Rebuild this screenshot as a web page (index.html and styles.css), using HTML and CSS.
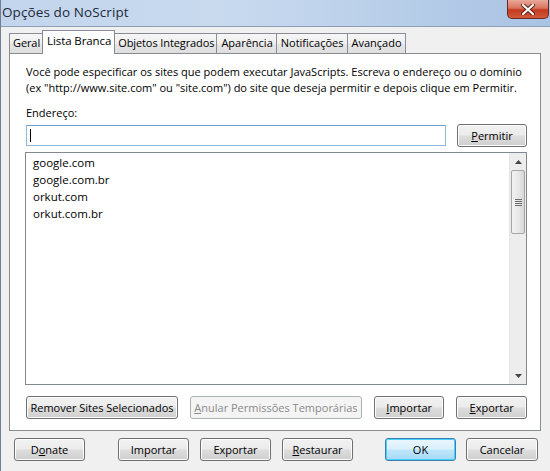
FILE: index.html
```html
<!DOCTYPE html>
<html lang="pt-BR">
<head>
<meta charset="utf-8">
<title>Opções do NoScript</title>
<link rel="stylesheet" href="styles.css">
</head>
<body>
<div class="window">
  <div class="titlebar">
    <span class="title">Opções do NoScript</span>
    <span class="close">
      <svg width="14" height="11" viewBox="0 0 14 11"><path d="M2 1 L12 10 M12 1 L2 10" stroke="#5a1a12" stroke-width="4" stroke-linecap="round"/><path d="M2 1 L12 10 M12 1 L2 10" stroke="#fff" stroke-width="2.2" stroke-linecap="round"/></svg>
    </span>
  </div>
  <div class="client">
    <div class="tabs">
      <div class="tab first">Geral</div>
      <div class="tab selected">Lista Branca</div>
      <div class="tab">Objetos Integrados</div>
      <div class="tab wide">Aparência</div>
      <div class="tab wide">Notificações</div>
      <div class="tab wide">Avançado</div>
    </div>
    <div class="panel">
      <p class="desc">Você pode especificar os sites que podem executar JavaScripts. Escreva o endereço ou o domínio (ex "http://www.site.com" ou "site.com") do site que deseja permitir e depois clique em Permitir.</p>
      <div class="label">Endereço:</div>
      <div class="addr-row">
        <div class="input"><span class="caret"></span></div>
        <button class="btn btn-permit"><u>P</u>ermitir</button>
      </div>
      <div class="list">
        <ul class="items">
          <li>google.com</li>
          <li>google.com.br</li>
          <li>orkut.com</li>
          <li>orkut.com.br</li>
        </ul>
        <div class="scrollbar">
          <div class="sb-btn"><svg width="7" height="4" viewBox="0 0 7 4"><path d="M0 4 L3.5 0 L7 4 Z" fill="#444"/></svg></div>
          <div class="sb-thumb"><span></span><span></span><span></span><span></span></div>
          <div class="sb-track"></div>
          <div class="sb-btn"><svg width="7" height="4" viewBox="0 0 7 4"><path d="M0 0 L3.5 4 L7 0 Z" fill="#444"/></svg></div>
        </div>
      </div>
      <div class="panel-buttons">
        <button class="btn w153">Remover Sites Selecionados</button>
        <button class="btn w173 disabled"><u>A</u>nular Permissões Temporárias</button>
        <button class="btn w71"><u>I</u>mportar</button>
        <button class="btn w71"><u>E</u>xportar</button>
      </div>
    </div>
    <div class="dialog-buttons">
      <button class="btn w71">D<u>o</u>nate</button>
      <button class="btn w71 gap-left">Importar</button>
      <button class="btn w71">Exportar</button>
      <button class="btn w71"><u>R</u>estaurar</button>
      <button class="btn w71 gap-ok default">OK</button>
      <button class="btn w72 tight">Cancelar</button>
    </div>
  </div>
</div>
</body>
</html>
```
FILE: styles.css
```css
* { box-sizing: border-box; }
html, body { margin: 0; padding: 0; }
body {
  width: 550px;
  height: 471px;
  overflow: hidden;
  background: #f0f0f0;
  font-family: "Open Sans", "Noto Sans", sans-serif;
  font-size: 11px;
  color: #000;
}
.window {
  width: 550px;
  height: 471px;
  display: flex;
  flex-direction: column;
  border-left: 1px solid #6f7f94;
}
.titlebar {
  height: 27px;
  display: flex;
  align-items: flex-start;
  background: linear-gradient(90deg, #c2d5ec 0%, #c9daef 40%, #b9cfe9 70%, #a9c3e3 100%);
  border-bottom: 1px solid #8d9fb5;
}
.title {
  font-size: 13.5px;
  color: #1e2a3a;
  padding: 3px 0 0 1px;
  letter-spacing: 0.1px;
}
.close {
  margin-left: auto;
  margin-right: 1px;
  width: 42px;
  height: 19px;
  display: flex;
  align-items: center;
  justify-content: center;
  background: linear-gradient(#e9a999 0%, #d9735f 45%, #c4391f 55%, #d25a3c 100%);
  border: 1px solid #6c2a1e;
  border-top: none;
  border-radius: 0 0 5px 5px;
}
.client {
  flex: 1;
  display: flex;
  flex-direction: column;
  padding: 4px 9px 0 8px;
}
.tabs {
  display: flex;
  align-items: flex-end;
  height: 23px;
  position: relative;
  z-index: 1;
  margin-bottom: -1px;
}
.tab {
  height: 20px;
  margin-bottom: 1px;
  padding: 0 2px 0 3px;
  line-height: 18px;
  border: 1px solid #898c95;
  border-left: none;
  border-bottom: none;
  background: linear-gradient(#f6f6f6 0%, #efefef 50%, #e6e6e6 51%, #dedede 100%);
  white-space: nowrap;
  letter-spacing: -0.1px;
}
.tab.wide { padding: 0 3px 0 4px; letter-spacing: 0; }
.tab.first { border-left: 1px solid #898c95; }
.tab.selected {
  height: 24px;
  margin-bottom: 0;
  line-height: 20px;
  background: #fff;
  border-left: 1px solid #898c95;
  margin-left: -1px;
  padding: 0 3px 0 4px;
  font-size: 11.5px;
}
.tab.selected + .tab { border-left: none; }
.panel {
  height: 378px;
  background: #fff;
  border: 1px solid #898c95;
  padding: 10px 13px 0 15px;
  display: flex;
  flex-direction: column;
}
.desc {
  margin: 0 0 0 1px;
  line-height: 16px;
  width: 500px;
}
.label {
  margin: 9px 0 0 1px;
  line-height: 16px;
}
.addr-row {
  display: flex;
  align-items: center;
  margin-top: 3px;
  height: 23px;
}
.input {
  width: 420px;
  height: 21px;
  margin-left: 1px;
  border: 1px solid #8fb7e0;
  border-top-color: #6f9fd0;
  background: #fff;
  padding: 3px 0 0 3px;
}
.caret {
  display: block;
  width: 1px;
  height: 13px;
  background: #000;
}
.btn-permit {
  margin-left: 11px;
  width: 70px;
}
.list {
  margin-top: 5px;
  height: 233px;
  border: 1px solid #828790;
  display: flex;
}
.items {
  flex: 1;
  list-style: none;
  margin: 0;
  padding: 1px 0 0 7px;
}
.items li {
  line-height: 17px;
  font-size: 11.5px;
}
.scrollbar {
  width: 17px;
  display: flex;
  flex-direction: column;
  background: #ededed;
  border-left: 1px solid #e4e4e4;
}
.sb-btn {
  height: 17px;
  display: flex;
  align-items: center;
  justify-content: center;
}
.sb-thumb {
  height: 64px;
  margin: 0 1px;
  border: 1px solid #a6a6a6;
  border-radius: 2px;
  background: linear-gradient(90deg, #f2f2f2, #e6e6e6 60%, #d6d6d6);
  display: flex;
  flex-direction: column;
  align-items: center;
  justify-content: center;
  gap: 1px;
}
.sb-thumb span {
  display: block;
  width: 7px;
  height: 1px;
  background: #6d6d6d;
}
.sb-track { flex: 1; }
.panel-buttons {
  display: flex;
  gap: 12px;
  margin-top: 11px;
  padding-left: 1px;
}
.btn {
  height: 23px;
  padding: 0;
  font-family: inherit;
  font-size: 11px;
  color: #000;
  border: 1px solid #707070;
  border-radius: 3px;
  background: linear-gradient(#f2f2f2 0%, #ebebeb 48%, #dddddd 52%, #cfcfcf 100%);
  box-shadow: inset 0 0 0 1px #fcfcfc;
  white-space: nowrap;
}
.btn.disabled {
  color: #8a8a8a;
  border-color: #adb2b5;
  background: #f4f4f4;
  box-shadow: none;
}
.btn.default {
  border-color: #3c7fb1;
  box-shadow: inset 0 0 0 1px #48d0fc;
  background: linear-gradient(#eaf6fd 0%, #d9f0fc 48%, #bee6fd 52%, #a7d9f5 100%);
}
.w153 { width: 153px; }
.w173 { width: 173px; }
.w71 { width: 71px; }
.w72 { width: 72px; }
.dialog-buttons {
  display: flex;
  gap: 11px;
  margin-top: 7px;
  padding-left: 5px;
}
.gap-left { margin-left: 22px; }
.gap-ok { margin-left: 21px; }
.tight { margin-left: -1px; }
```
